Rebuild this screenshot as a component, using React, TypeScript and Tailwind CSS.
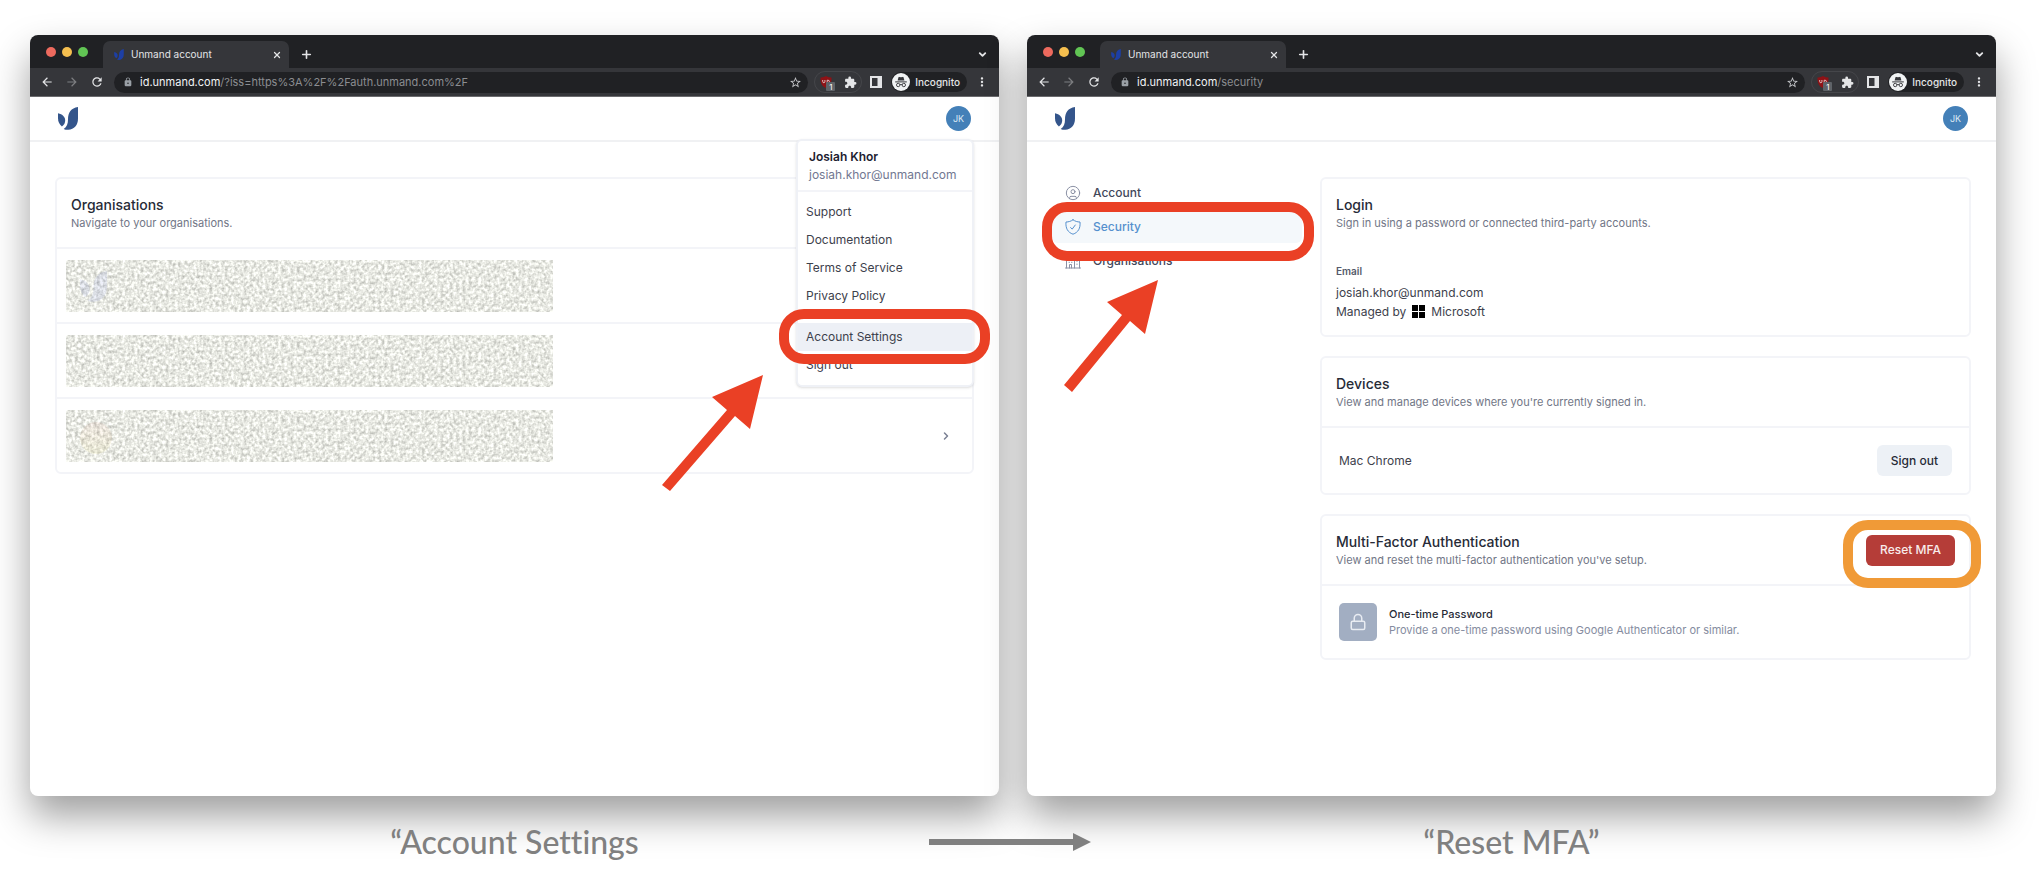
import type { ReactNode } from 'react';
import { ChevronDown, ChevronRight, CircleUser, Lock, Plus, X } from 'lucide-react';
import { MdArrowBack, MdArrowForward, MdExtension, MdLock, MdMoreVert, MdRefresh, MdStarBorder } from 'react-icons/md';

function Logo({ className }: { className?: string }) {
  return (
    <svg viewBox="0 0 20 23" className={className} fill="currentColor" aria-hidden="true">
      <path d="M0 6.200C4.600 7 7.200 10 7.200 13.400c0 2.600-1.300 4.500-3.300 6C1.300 17.300 0 14.700 0 11.200z" />
      <path d="M20 0v11.500c0 6.700-3.700 11-9.700 11.300-1.800.1-3.200-.2-4.600-.9 3.200-2 4.300-5 4.300-9.400C10 5.500 13 1 20 0z" />
    </svg>
  );
}

function IncognitoIcon() {
  return (
    <svg viewBox="0 0 18 18" className="size-[18px]" aria-hidden="true">
      <circle cx="9" cy="9" r="9" fill="#f1f3f4" />
      <path d="M5.600 7.600 6.500 4.300q.2-.6.800-.4l1.700.4 1.700-.4q.6-.2.800.4l.9 3.300z" fill="#35363a" />
      <path d="M3.200 8.900h11.600" stroke="#35363a" strokeWidth="1" />
      <g fill="none" stroke="#35363a" strokeWidth="0.900">
        <circle cx="6.200" cy="12" r="1.700" />
        <circle cx="11.800" cy="12" r="1.700" />
        <path d="M7.900 11.800q1.100-.7 2.200 0" />
      </g>
    </svg>
  );
}

function ShieldIcon() {
  return (
    <svg viewBox="0 0 16 16" className="size-4" fill="none" stroke="currentColor" strokeLinecap="round" strokeLinejoin="round" aria-hidden="true">
      <path d="M8 .8c2.100 1.500 4.400 2.200 7 2.200.6 6.200-1.800 10.400-7 12.200C2.800 13.400.4 9.200 1 3 3.600 3 5.900 2.300 8 .8z" />
      <path d="m5.600 8.600 1.600 1.500L10.300 6" />
    </svg>
  );
}

function BuildingIcon() {
  return (
    <svg viewBox="0 0 16 16" className="size-4" fill="none" stroke="currentColor" strokeLinecap="round" aria-hidden="true">
      <path d="M.5 15h15M1.500 15V1.500h8V15M9.500 5.500h5V15M4.500 15v-3.500h2V15" />
      <path d="M4 4.500h.5M6.500 4.500H7M4 7h.5M6.500 7H7M4 9.300h.5M6.500 9.300H7M12 8v.5M12 11v.5" />
    </svg>
  );
}

function BrowserWindow({ domain, path, children }: { domain: string; path: string; children: ReactNode }) {
  return (
    <section className="flex min-w-0 flex-1 flex-col rounded-lg bg-white shadow-[0_20px_38px_rgba(0,0,0,0.38)]">
      <div className="flex h-[33px] rounded-t-lg bg-[#202124] pr-[11px] pl-4">
        <div className="flex gap-[6px] pt-3">
          <span className="size-[10px] rounded-full bg-[#ed6a5e]" />
          <span className="size-[10px] rounded-full bg-[#f5bf4f]" />
          <span className="size-[10px] rounded-full bg-[#61c554]" />
        </div>
        <div className="mt-[6px] ml-[15px] flex w-[186px] items-center rounded-t-[7px] bg-[#35363a] pr-[7px] pl-[11px] text-[#e4e5e7]">
          <Logo className="h-[11px] w-[10px] text-[#1d3fa5]" />
          <span className="ml-[7px] flex-1 text-[10px]">Unmand account</span>
          <button aria-label="Close tab">
            <X className="size-[10px]" strokeWidth={3} />
          </button>
        </div>
        <button aria-label="New tab" className="ml-[11px] pt-[6px] text-[#e4e5e7]">
          <Plus className="size-[13px]" strokeWidth={3} />
        </button>
        <button aria-label="Search tabs" className="ml-auto pt-[6px] text-[#e4e5e7]">
          <ChevronDown className="size-[11px]" strokeWidth={4} />
        </button>
      </div>

      <div className="flex h-[29px] items-center border-b border-[#6b6b6e] bg-[#35363a] pr-[10px] pl-[10px] text-[#e4e5e7]">
        <button aria-label="Back"><MdArrowBack className="size-[14px]" /></button>
        <button aria-label="Forward" className="ml-[11px] text-[#7d7e81]"><MdArrowForward className="size-[14px]" /></button>
        <button aria-label="Reload" className="ml-[11px]"><MdRefresh className="size-[14px]" /></button>
        <div className="ml-[10px] flex h-[21px] flex-1 items-center rounded-full bg-[#202124] pr-[6px] pl-[9px] text-[11px]">
          <MdLock className="size-[10px] text-[#9aa0a6]" />
          <span className="ml-[7px] flex-1 text-[#8b8d91]">
            <span className="text-[#f1f2f4]">{domain}</span>{path}
          </span>
          <MdStarBorder className="size-[13px] text-[#c4c6c9]" />
        </div>
        <div className="ml-[6px] flex h-[22px] items-center gap-[12px] rounded-full border border-[#45464a] pr-[4px] pl-[5px]">
          <span className="relative block">
            <svg viewBox="0 0 12 12" className="size-3" aria-hidden="true">
              <path d="M6 0q2.500 1.500 5.500 1.500C11.700 7 10 10.300 6 12 2 10.300.3 7 .5 1.500 3.500 1.500 6 0 6 0z" fill="#8e1216" />
              <path d="M2.700 4v1.500q0 1.200 1.100 1.200t1.100-1.200V4M7.200 4.200v2.400q2.300.1 2.300-1.200T7.200 4.200z" fill="none" stroke="#e8cfd0" strokeWidth="0.900" />
            </svg>
            <span className="absolute top-[6px] left-[6px] flex h-[9px] w-[9px] items-center justify-center rounded-[1px] bg-[#5f6368] text-[8px] text-white">1</span>
          </span>
          <MdExtension className="size-[13px]" />
        </div>
        <svg viewBox="0 0 12 12" className="ml-[8px] size-3" aria-hidden="true">
          <path d="M1 1h10v10H1z" fill="none" stroke="currentColor" strokeWidth="2" />
          <path d="M7.500 1H11v10H7.500z" fill="currentColor" />
        </svg>
        <div className="ml-[9px] flex h-5 items-center gap-[5px] rounded-full bg-[#202124] pr-[7px] pl-[1px] text-[10px] font-medium">
          <IncognitoIcon />
          Incognito
        </div>
        <button aria-label="Menu" className="ml-2"><MdMoreVert className="size-[14px]" /></button>
      </div>

      <header className="flex h-[45px] items-center justify-between border-b-2 border-[#f0f1f3] pr-[28px] pl-[28px]">
        <Logo className="h-[23px] w-5 text-[#34558b]" />
        <button className="size-[25px] rounded-full bg-[#4480b8] text-[9px] text-[#dbe8f4]">JK</button>
      </header>
      {children}
    </section>
  );
}

function Card({ title, subtitle, action, children }: { title: string; subtitle: string; action?: ReactNode; children: ReactNode }) {
  return (
    <section className="rounded-md border-2 border-[#f3f4f8]">
      <div className="flex h-[68px] items-center justify-between px-[14px]">
        <div>
          <h2 className="text-[14px] leading-[20px] font-medium text-[#272b37]">{title}</h2>
          <p className="text-[11px] leading-[17px] text-[#717686]">{subtitle}</p>
        </div>
        {action}
      </div>
      {children}
    </section>
  );
}

function LongArrow({ className }: { className: string }) {
  return (
    <svg viewBox="0 0 101 116" className={className} fill="#ea4025" aria-hidden="true">
      <path d="M101 0 88 54 73 41 8 116 0 110 65 35 50 22z" />
    </svg>
  );
}

function ShortArrow({ className }: { className: string }) {
  return (
    <svg viewBox="0 0 94 112" className={className} fill="#ea4025" aria-hidden="true">
      <path d="M94 0 81 54 66 41 8 112 0 105 58 35 43 22z" />
    </svg>
  );
}

// Grainy block that hides an organisation's name, its logo just shows through
function RedactedBlock({ children }: { children?: ReactNode }) {
  return (
    <div className="relative h-[52px] w-[55%] bg-[#ecece7]">
      <svg className="size-full" aria-hidden="true">
        <rect width="100%" height="100%" filter="url(#grain)" />
      </svg>
      {children}
    </div>
  );
}

const organisations = [
  { id: 1, mark: <Logo className="absolute top-[11px] left-[14px] h-[31px] w-[27px] text-[#5568e0]/10" /> },
  { id: 2, mark: null },
  {
    id: 3,
    mark: <span className="absolute top-[12px] left-[14px] size-[32px] rounded-full bg-linear-to-b from-[#e08070]/8 to-[#e8d850]/10" />,
  },
];

const links = ['Support', 'Documentation', 'Terms of Service', 'Privacy Policy'];

function AccountMenu() {
  return (
    <div className="absolute top-[-3px] right-[25px] w-[178px] rounded-md border-2 border-[#eff1f6] bg-white text-[12px] shadow-sm">
      <div className="border-b-2 border-[#f3f4f8] px-[11px] pt-[7px] pb-[6px] leading-[18px]">
        <p className="font-semibold text-[#1d2130]">Josiah Khor</p>
        <p className="text-[#717791]">josiah.khor@unmand.com</p>
      </div>
      <ul className="pt-[6px] pb-[6px] text-[#3d414c]">
        {links.map((label) => (
          <li key={label}>
            <a href="#" className="block px-2 leading-[28px]">{label}</a>
          </li>
        ))}
      </ul>
      <ul className="border-t-2 border-[#f3f4f8] pt-[5px] pb-[6px] text-[#3d414c]">
        <li className="relative">
          <a href="#" className="block bg-[#edf0f6] px-2 leading-[28px]">Account Settings</a>
          <span className="absolute -top-[14px] -right-[18px] -bottom-[13px] -left-[19px] rounded-[25px] border-[10px] border-[#ea4025]" />
          <LongArrow className="absolute top-[52px] left-[-136px] h-[116px] w-[101px]" />
        </li>
        <li>
          <a href="#" className="block px-2 leading-[28px]">Sign out</a>
        </li>
      </ul>
    </div>
  );
}

function OrganisationsPage() {
  return (
    <main className="relative px-[25px] pt-[35px]">
      <Card title="Organisations" subtitle="Navigate to your organisations.">
        {organisations.map(({ id, mark }) => (
          <div key={id} className="flex h-[75px] items-center justify-between border-t-2 border-[#f3f4f8] pr-[20px] pl-[9px]">
            <RedactedBlock>{mark}</RedactedBlock>
            <ChevronRight className="size-3 text-[#7a8094]" strokeWidth={3} />
          </div>
        ))}
      </Card>
      <AccountMenu />
    </main>
  );
}

function SecurityPage() {
  return (
    <main className="flex gap-[18px] pt-[35px] pr-[25px] pl-[25px]">
      <nav className="flex w-[250px] shrink-0 flex-col gap-[2px] text-[12px] font-medium text-[#42475a]">
        <a href="#" className="flex h-8 items-center gap-[12px] pl-[13px]">
          <CircleUser className="size-4 text-[#8b91a5]" strokeWidth={1.5} />
          Account
        </a>
        <a href="#" className="relative flex h-8 items-center gap-[12px] rounded-md bg-[#f4f8fb] pl-[13px] text-[#5590ce]">
          <ShieldIcon />
          Security
          <span className="absolute -top-[9px] -right-[12px] -bottom-[18px] -left-[10px] rounded-[25px] border-[10px] border-[#ea4025]" />
          <ShortArrow className="absolute top-[69px] left-[12px] h-[112px] w-[94px]" />
        </a>
        <a href="#" className="flex h-8 items-center gap-[12px] pl-[13px]">
          <span className="text-[#8b91a5]"><BuildingIcon /></span>
          Organisations
        </a>
      </nav>

      <div className="flex min-w-0 flex-1 flex-col gap-[19px]">
        <Card title="Login" subtitle="Sign in using a password or connected third-party accounts.">
          <div className="px-[14px] pt-[16px] pb-[14px] text-[12px] leading-[19px] text-[#3d414c]">
            <h3 className="pb-[3px] text-[10px] leading-[17px] font-semibold text-[#555a6b]">Email</h3>
            <p>josiah.khor@unmand.com</p>
            <p className="flex items-center gap-[6px]">
              Managed by
              <svg viewBox="0 0 13 13" className="size-[13px]" aria-hidden="true">
                <path d="M0 0h6v6H0zM7 0h6v6H7zM0 7h6v6H0zM7 7h6v6H7z" />
              </svg>
              Microsoft
            </p>
          </div>
        </Card>

        <Card title="Devices" subtitle="View and manage devices where you're currently signed in.">
          <div className="flex h-[67px] items-center justify-between border-t-2 border-[#f3f4f8] px-[17px] text-[12px] text-[#3d414c]">
            Mac Chrome
            <button className="h-[31px] rounded-md bg-[#edf1f6] px-[14px] font-medium text-[#272b37]">Sign out</button>
          </div>
        </Card>

        <Card
          title="Multi-Factor Authentication"
          subtitle="View and reset the multi-factor authentication you've setup."
          action={
            <button className="relative h-[31px] rounded-md bg-[#b53d38] px-[14px] text-[12px] font-medium text-[#f8eceb]">
              Reset MFA
              <span className="absolute -top-[15px] -right-[26px] -bottom-[22px] -left-[23px] rounded-[25px] border-[10px] border-[#f09a37]" />
            </button>
          }
        >
          <div className="flex h-[74px] items-center gap-3 border-t-2 border-[#f3f4f8] px-[17px]">
            <span className="flex size-[38px] items-center justify-center rounded-[5px] bg-[#a2aec2] text-[#e8ecf2]">
              <Lock className="size-[18px]" strokeWidth={2} />
            </span>
            <div className="text-[11px] leading-[16px]">
              <h3 className="font-medium text-[#272b37]">One-time Password</h3>
              <p className="text-[#858ca0]">Provide a one-time password using Google Authenticator or similar.</p>
            </div>
          </div>
        </Card>
      </div>
    </main>
  );
}

export default function App() {
  return (
    <div className="flex min-h-screen flex-col overflow-hidden bg-white pt-[35px] pr-[46px] pl-[30px] font-['Inter',sans-serif]">
      <svg className="absolute size-0" aria-hidden="true">
        <filter id="grain" x="0" y="0" width="100%" height="100%" colorInterpolationFilters="sRGB">
          <feTurbulence type="fractalNoise" baseFrequency="0.32" numOctaves="2" seed="4" />
          <feColorMatrix values="0.5 0 0 0 0.66  0.5 0 0 0 0.665  0.5 0 0 0 0.64  0 0 0 0 1" />
        </filter>
      </svg>

      <div className="flex flex-1 gap-[28px]">
        <BrowserWindow domain="id.unmand.com" path="/?iss=https%3A%2F%2Fauth.unmand.com%2F">
          <OrganisationsPage />
        </BrowserWindow>
        <BrowserWindow domain="id.unmand.com" path="/security">
          <SecurityPage />
        </BrowserWindow>
      </div>

      <div className="grid h-[92px] grid-cols-[1fr_28px_1fr] items-center text-center font-['Lato',sans-serif] text-[32px] font-medium text-[#808080] [font-variant-ligatures:none]">
        <p>“Account Settings</p>
        <div className="flex justify-center pr-[6px]">
          <svg viewBox="0 0 162 18" className="h-[18px] w-[162px] shrink-0" fill="currentColor" aria-hidden="true">
            <path d="M0 6h144V0l18 9-18 9v-6H0z" />
          </svg>
        </div>
        <p>“Reset MFA”</p>
      </div>
    </div>
  );
}
